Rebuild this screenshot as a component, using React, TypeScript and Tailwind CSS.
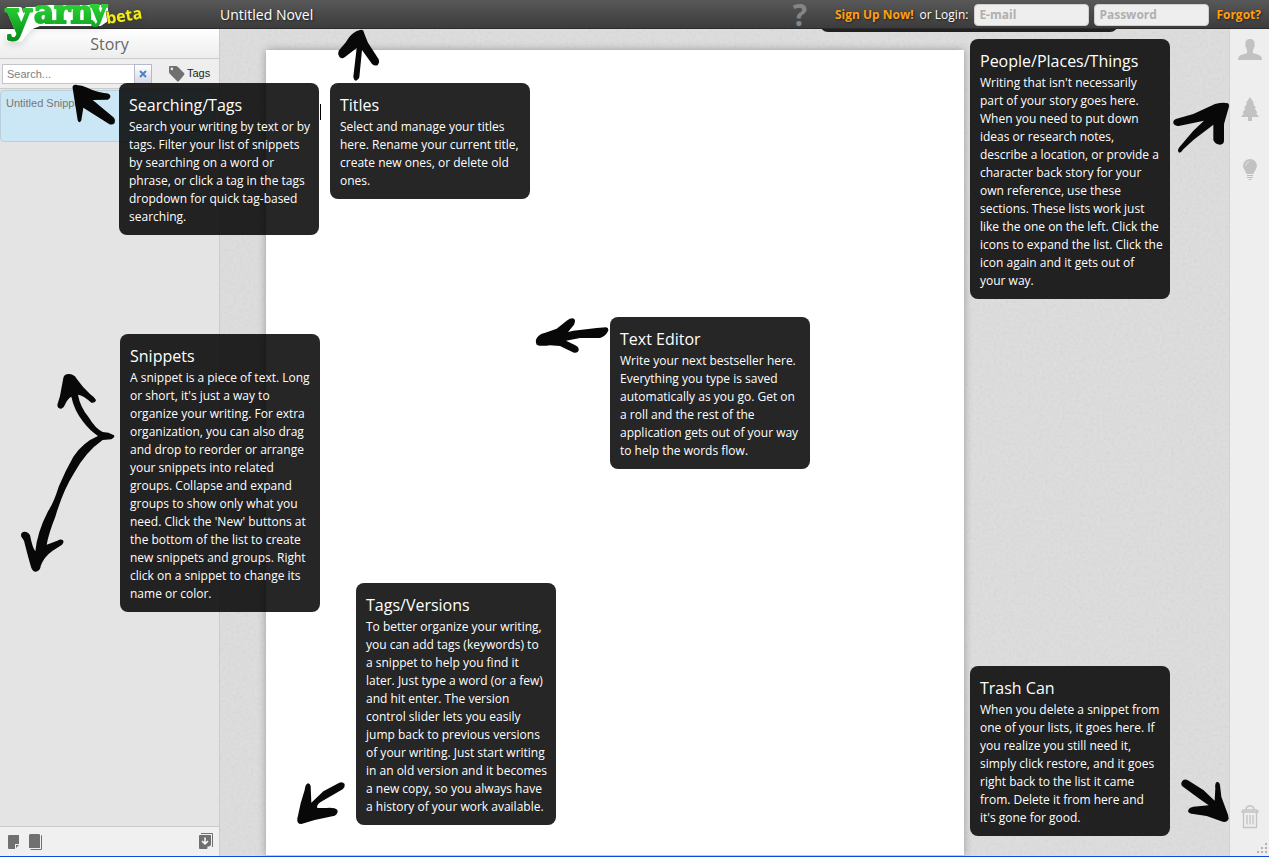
import React from 'react';
import { clsx } from 'clsx';

interface Tip {
  title: string;
  body: string;
  place: string;
}

const TIPS: Tip[] = [
  {
    title: 'Searching/Tags',
    body: 'Search your writing by text or by tags. Filter your list of snippets by searching on a word or phrase, or click a tag in the tags dropdown for quick tag-based searching.',
    place: 'left-[119px] top-[83px]',
  },
  {
    title: 'Titles',
    body: 'Select and manage your titles here. Rename your current title, create new ones, or delete old ones.',
    place: 'left-[330px] top-[83px]',
  },
  {
    title: 'People/Places/Things',
    body: "Writing that isn't necessarily part\u00a0of your story goes here. When you need to put down ideas or research notes, describe a location, or provide a character back story for your own reference, use these sections. These lists work just like the one on the left. Click the icons to expand the list. Click the icon again and it gets out of your\u00a0way.",
    place: 'right-[99px] top-[39px]',
  },
  {
    title: 'Snippets',
    body: "A snippet is a piece of text. Long or short, it's just a way to organize your writing. For extra organization, you can also drag and drop to reorder or arrange your snippets into related groups. Collapse and expand groups to show only what you need. Click the 'New' buttons at the bottom of the list to create new snippets and groups. Right click on a snippet to change its name or color.",
    place: 'left-[120px] top-[334px]',
  },
  {
    title: 'Text Editor',
    body: 'Write your next bestseller here. Everything you type is saved automatically as you go. Get on a roll and the rest of the application gets out of your way to help the words flow.',
    place: 'left-[610px] top-[317px]',
  },
  {
    title: 'Tags/Versions',
    body: 'To better organize your writing, you can add tags (keywords) to a\u00a0snippet to help you find it later. Just type a word (or a few) and hit enter. The version control slider lets you easily jump back to previous versions of your writing. Just start writing in an old version and it becomes a new copy, so you always have a\u00a0history of your work available.',
    place: 'left-[356px] bottom-[31px]',
  },
  {
    title: 'Trash Can',
    body: "When you delete a snippet from one of your lists, it goes here. If you realize you still need it, simply click restore, and it goes right back to the list it came from. Delete it from here and it's\u00a0gone for good.",
    place: 'right-[99px] bottom-5',
  },
];

// hand drawn arrows, one per tip
const ARROWS = [
  {
    place: 'left-[70px] top-[83px] w-[47px] h-[43px]',
    box: '210 250 141 129',
    d: 'M230 256C222 254 216 258 218 266L233 362Q238 374 244 362L250 324L326 372Q336 378 344 370Q348 362 342 354L278 301L324 300Q334 294 330 286Q326 280 312 280Q280 274 262 264Q246 256 230 256Z',
  },
  {
    place: 'left-[337px] top-[29px] w-[44px] h-[52px]',
    box: '51 27 132 156',
    d: 'M120 30C108 32 92 42 78 66L56 92Q52 102 58 110Q66 118 74 112L110 84L100 170Q102 182 108 182Q116 180 118 172L126 90L156 132Q166 140 174 134Q180 126 176 118L144 68Q134 44 130 32Q126 28 120 30Z',
  },
  {
    place: 'right-[39px] top-[102px] w-[58px] h-[52px]',
    box: '36 216 174 156',
    d: 'M204 220Q190 216 165 222L100 252L50 266Q38 270 40 280Q44 290 56 288L132 272L100 302L58 352Q50 364 58 368Q64 368 70 358L100 330L160 284L160 330Q166 344 180 344Q192 342 192 332L192 282L204 240Q210 224 204 220Z',
  },
  {
    place: 'left-[20px] top-[373px] w-[96px] h-[200px]',
    box: '60 39 288 600',
    d: 'M206 42Q192 42 190 54L180 108L172 134Q172 146 184 146Q192 144 194 136Q202 116 214 110Q222 150 250 186Q270 212 294 228Q250 246 220 290Q196 332 176 380Q162 426 144 454Q112 516 106 574Q98 566 90 526Q84 514 72 515Q60 518 64 530L72 542Q84 590 94 624Q100 638 112 634Q122 628 122 618Q132 590 158 572L186 554Q194 546 188 540Q182 536 172 542L140 554Q146 520 166 470Q190 390 222 340Q256 276 308 240L334 238Q346 232 342 226Q326 216 308 216Q286 206 266 172Q240 140 234 104Q250 106 274 128Q286 130 288 120Q284 112 270 102Q250 84 230 56Q222 42 206 42Z',
  },
  {
    place: 'left-[535px] top-[317px] w-[75px] h-[37px]',
    box: '45 51 225 111',
    d: 'M52 112Q44 122 50 134Q60 140 90 136L120 138Q144 150 162 158Q174 160 176 150Q178 142 166 136L138 122L180 114L240 114Q256 110 264 94Q268 84 258 82L230 84L160 92L144 96L162 74Q168 60 162 56Q154 52 140 62L110 86L76 98Q58 102 52 112Z',
  },
  {
    place: 'left-[296px] bottom-[30px] w-[50px] h-[46px]',
    box: '48 600 150 138',
    d: 'M84 610Q76 612 74 630L62 670L52 716Q50 732 64 732L104 720L164 707Q176 700 172 690Q164 682 140 684L112 684Q108 676 122 666L188 628Q196 620 194 612Q188 604 178 608L130 634L94 668L92 618Q90 610 84 610Z',
  },
  {
    place: 'right-[39px] bottom-[33px] w-[50px] h-[44px]',
    box: '60 57 150 132',
    d: 'M70 60Q60 68 66 78L120 118L146 136L100 140Q84 144 84 154Q88 162 100 162L140 168L184 184Q200 190 206 176L204 164L184 110L180 76Q178 64 170 66Q164 70 166 84L164 122L130 90L86 62Q76 56 70 60Z',
  },
];

const Logo: React.FC = () => (
  <svg
    viewBox="0 0 150 52"
    className="absolute top-0 left-0 h-[52px] w-[150px] drop-shadow-md"
    fontFamily="DejaVu Serif, serif"
    fontWeight="bold"
    strokeLinejoin="round"
    role="img"
    aria-label="Yarny beta"
  >
    <defs>
      <linearGradient id="yarn" gradientUnits="userSpaceOnUse" x1="0" y1="4" x2="0" y2="40">
        <stop offset="0" stopColor="#2bd335" />
        <stop offset="1" stopColor="#048f1a" />
      </linearGradient>
    </defs>
    {/* white outline behind the letters */}
    <path
      d="M8 9H20L24 20L27 9H35L50 7L62 7H106V20L100 24H40L30 28L20 40H8V33L17 30Z"
      fill="#fff"
      stroke="#fff"
      strokeWidth="4"
    />
    <text fill="url(#yarn)" stroke="url(#yarn)" strokeWidth="2" fontSize="31">
      <tspan x="6" y="31" fontSize="43">y</tspan>
      <tspan x="34" y="23">arn</tspan>
      <tspan x="91" y="20" fontSize="27">y</tspan>
    </text>
    <text
      x="107"
      y="24"
      fontSize="16"
      fontFamily="Open Sans, sans-serif"
      fill="#f4ee1b"
      stroke="#4a4a16"
      strokeWidth="1"
      paintOrder="stroke"
      transform="rotate(-9 107 24)"
    >
      beta
    </text>
  </svg>
);

const Header: React.FC = () => (
  <header className="relative z-20 flex h-[29px] shrink-0 items-center border-b border-[#2b2b2b] bg-linear-to-b from-[#585858] to-[#3c3c3c] pt-0.5 text-white">
    <Logo />
    <h1 className="ml-[220px] text-sm leading-5 [text-shadow:1px_1px_2px_#222]">Untitled Novel</h1>
    <button type="button" aria-label="Help" className="ml-auto w-5 text-[30px] leading-7 font-bold text-[#858585]">?</button>
    <form className="ml-[25px] flex items-center pb-px text-xs [text-shadow:1px_1px_2px_#222]">
      <a href="#signup" className="font-bold text-[#ff9f0f]">Sign Up Now!</a>
      <span className="ml-1.5">or Login:</span>
      <input
        type="email"
        aria-label="E-mail"
        placeholder="E-mail"
        className="ml-1.5 h-[22px] w-[115px] rounded border border-[#cfcfcf] bg-[#eeeeee] px-1 font-bold text-[#333] placeholder:text-[#b0b0b0] [text-shadow:none]"
      />
      <input
        type="password"
        aria-label="Password"
        placeholder="Password"
        className="ml-[5px] h-[22px] w-[115px] rounded border border-[#cfcfcf] bg-[#eeeeee] px-1 font-bold text-[#333] placeholder:text-[#b0b0b0] [text-shadow:none]"
      />
      <a href="#forgot" className="mr-2 ml-[7px] font-bold text-[#ff9f0f]">Forgot?</a>
    </form>
  </header>
);

const Sidebar: React.FC = () => (
  <aside className="flex w-[220px] shrink-0 flex-col border-r border-[#cccccc] bg-[#e4e4e4] font-['Liberation_Sans',Arial,sans-serif] text-[11px]">
    <h2 className="h-[30px] border-b border-[#cccccc] bg-linear-to-b from-white to-[#ededed] text-center font-['Open_Sans',sans-serif] text-base leading-[30px] text-[#666666]">
      Story
    </h2>
    <div className="flex h-[30px] items-center border-b border-[#cccccc] bg-[#eeeeee] pl-0.5">
      <input
        type="search"
        aria-label="Search"
        placeholder="Search..."
        className="h-5 w-[133px] border border-[#c4c4cc] bg-white px-1 placeholder:text-[#808080]"
      />
      <button type="button" aria-label="Clear search" className="-ml-px flex h-5 w-[18px] items-center justify-center border border-[#b5b8c8] bg-linear-to-b from-white to-[#d5d9e4]">
        <svg viewBox="0 0 8 8" className="size-2" stroke="#4a86c5" strokeWidth="2">
          <path d="M1 1L7 7M7 1L1 7" />
        </svg>
      </button>
      <button type="button" className="ml-4 flex items-center gap-0.5 text-[#222]">
        <svg viewBox="0 0 17 17" className="size-[17px]" fill="#707070">
          <path fillRule="evenodd" d="M2 1H8Q9 1 10 2L16 8Q17 9 16 10L11 16Q10 17 9 16L2 9Q1 8 1 7V2Q1 1 2 1ZM3.800 2.600a1.300 1.300 0 1 0 .1 0Z" />
        </svg>
        Tags
      </button>
    </div>
    <ul className="flex-1">
      <li className="mt-px mr-1 flex h-[52px] flex-col justify-between rounded border border-[#b9cfdb] bg-[#cbe6f5] px-[5px] py-1 leading-4 text-[#777777]">
        <span>Untitled Snippet</span>
        <span className="text-right text-[10px]">0 words</span>
      </li>
    </ul>
    <footer className="flex h-[30px] items-center gap-[9px] border-t border-[#cccccc] bg-[#f0f0f0] px-2">
      <button type="button" aria-label="New snippet">
        <svg viewBox="0 0 12 16" className="h-4 w-3" fill="#707070">
          <path d="M1 1H11V10H7V15H1Q0 15 0 14V2Q0 1 1 1ZM8 11H11L8 14Z" />
        </svg>
      </button>
      <button type="button" aria-label="New group">
        <svg viewBox="0 0 14 16" className="h-4 w-3.5">
          <path d="M1 0H10Q11 0 11 1V14H0V1Z" fill="#707070" />
          <path d="M12 1.500H12.500V15.500H1.500" fill="none" stroke="#707070" />
        </svg>
      </button>
      <button type="button" aria-label="Export" className="-mr-0.5 ml-auto">
        <svg viewBox="0 0 14 17" className="h-[17px] w-3.5">
          <path d="M2 .5H13.500V14" fill="none" stroke="#707070" />
          <path d="M1 2H11Q12 2 12 3V12L8 16H1Q0 16 0 15V3Q0 2 1 2Z" fill="#707070" />
          <path d="M6 4.500V11M3 8L6 11L9 8" fill="none" stroke="#fff" strokeWidth="1.500" />
          <path d="M8.500 16V13.500H11Z" fill="#fff" />
        </svg>
      </button>
    </footer>
  </aside>
);

const Canvas: React.FC = () => (
  <main className="relative flex flex-1 bg-[#dedede] pt-[21px] pr-[265px] pl-[46px]">
    {/* paper grain */}
    <svg className="absolute inset-0 size-full opacity-15" aria-hidden="true">
      <filter id="grain">
        <feTurbulence type="fractalNoise" baseFrequency="0.35" numOctaves="3" seed="4" />
        <feColorMatrix type="saturate" values="0" />
      </filter>
      <rect width="100%" height="100%" filter="url(#grain)" />
    </svg>
    <div className="relative flex flex-1 border-b border-[#c8c8c8] bg-white pt-[54px] pl-[54px] shadow-[0_0_8px_rgba(0,0,0,0.3)]">
      <span className="h-4 w-px bg-black" />
      <textarea aria-label="Story text" className="flex-1 resize-none outline-none" />
    </div>
  </main>
);

const IconRail: React.FC = () => (
  <nav className="flex w-10 shrink-0 flex-col items-center border-l border-[#d2d2d2] bg-[#eeeeee] pt-2.5">
    <button type="button" aria-label="People">
      <svg viewBox="0 0 24 21" className="h-[21px] w-6" fill="#c2c2c2">
        <path d="M12 0C15 0 17 2 16.500 5C17 6 16.500 8 16 8.500C15.500 10 15 11 14.800 12L15 14L21 16Q24 17 24 21H0Q0 17 3 16L9 14L9.200 12C9 11 8.500 10 8 8.500C7.500 8 7 6 7.500 5C7 2 9 0 12 0Z" />
      </svg>
    </button>
    <button type="button" aria-label="Places" className="mt-[37px]">
      <svg viewBox="0 0 18 24" className="h-6 w-[18px]" fill="#c2c2c2">
        <path d="M9 0L13 6L12 6.500L15 11L13.500 11.500L16.500 15.500L15 16L18 20H11V24H7V20H0L3 16L1.500 15.500L4.500 11.500L3 11L6 6.500L5 6Z" />
      </svg>
    </button>
    <button type="button" aria-label="Things" className="mt-[38px]">
      <svg viewBox="0 0 14 22" className="h-[22px] w-3.5">
        <path d="M7 0A7 7 0 0 1 14 7C14 10 11 12 10.500 15H3.500C3 12 0 10 0 7A7 7 0 0 1 7 0Z" fill="#c2c2c2" />
        <path d="M4 16.500H10M4 18.500H10M5.500 20.500H8.500" stroke="#bdbdbd" />
        <path d="M2.500 7Q3 3 6.500 2.500" fill="none" stroke="#e0e0e0" />
      </svg>
    </button>
    <button type="button" aria-label="Trash" className="mt-auto mb-[27px]">
      <svg viewBox="0 0 18 24" className="h-6 w-[18px]" fill="none" stroke="#c2c2c2" strokeWidth="1.300">
        <path d="M1 7Q1 5 3 5H15Q17 5 17 7ZM5 5Q5 1 9 1Q13 1 13 5M2.500 7V22.500H15.500V7M6 10V19.500M9 10V19.500M12 10V19.500" />
      </svg>
    </button>
  </nav>
);

export default function App() {
  return (
    <div className="relative flex h-screen flex-col overflow-hidden border-b border-[#0a4be0] bg-[#dcdcdc] font-['Open_Sans',sans-serif]">
      <Header />
      <div className="flex min-h-0 flex-1">
        <Sidebar />
        <Canvas />
        <IconRail />
      </div>

      {/* tail of the help tip tucked under the header */}
      <div className="absolute top-0 right-[151px] z-10 h-8 w-[298px] rounded-b-lg bg-black/85" />

      {TIPS.map((tip) => (
        <section key={tip.title} className={clsx('absolute z-10 w-[200px] rounded-lg bg-black/85 px-2.5 pt-2.5 pb-[9px] text-white', tip.place)}>
          <h3 className="mb-px text-base leading-6">{tip.title}</h3>
          <p className="-mr-1 text-xs leading-[18px]">{tip.body}</p>
        </section>
      ))}
      {ARROWS.map((arrow) => (
        <svg key={arrow.box} viewBox={arrow.box} className={clsx('absolute z-10', arrow.place)} fill="#080808" aria-hidden="true">
          <path d={arrow.d} />
        </svg>
      ))}

      <svg viewBox="0 0 12 12" className="absolute right-0 bottom-px z-10 size-3" fill="#b5b1a4" aria-hidden="true">
        <path d="M8 0h2v2h-2zM8 4h2v2h-2zM4 4h2v2h-2zM8 8h2v2h-2zM4 8h2v2h-2zM0 8h2v2h-2z" />
      </svg>
    </div>
  );
}
